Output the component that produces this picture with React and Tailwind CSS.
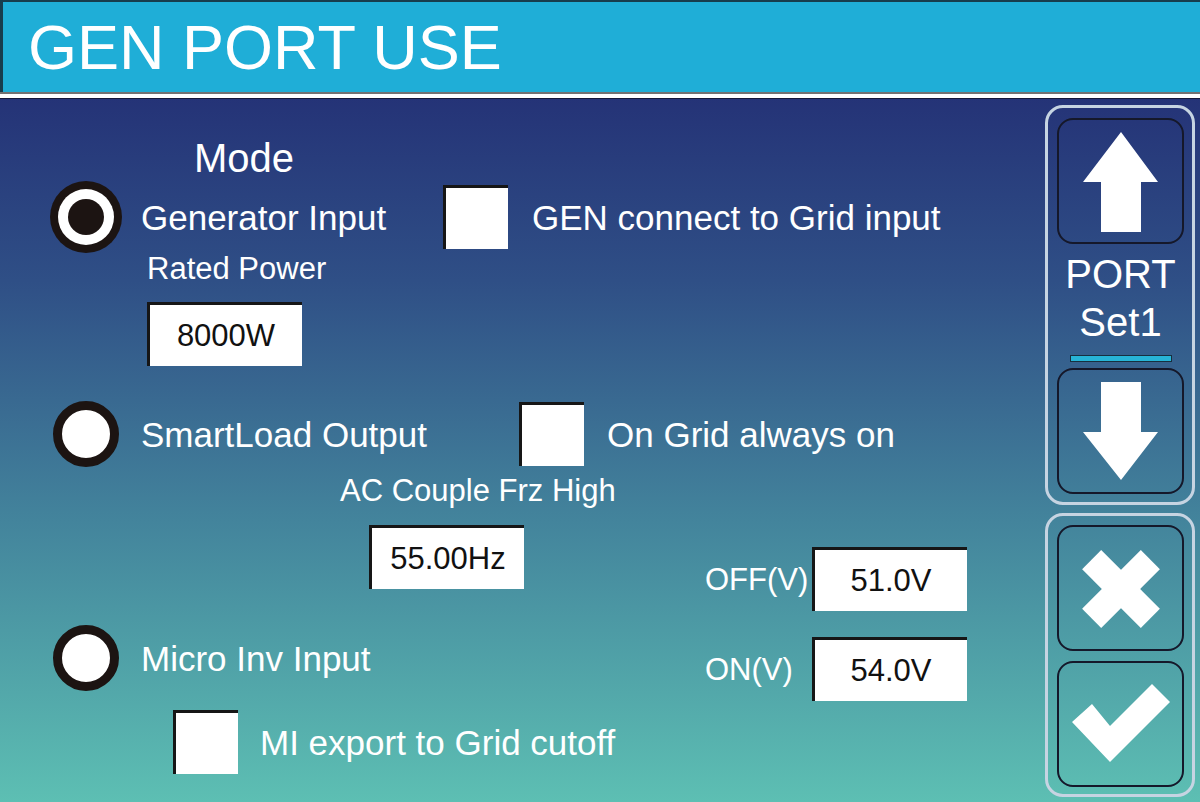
import React from 'react';

function Radio({ checked }) {
  return (
    <div className="w-[70px] h-[72px] shrink-0 flex items-center justify-center">
      {checked ? (
        <div className="w-[72px] h-[72px] shrink-0 rounded-full bg-[#1c1412] p-[8px]">
          <div className="w-full h-full rounded-full bg-white p-[10px]">
            <div className="w-full h-full rounded-full bg-[#1c1412]" />
          </div>
        </div>
      ) : (
        <div className="w-[66px] h-[66px] shrink-0 rounded-full bg-white border-[9px] border-[#1c1412]" />
      )}
    </div>
  );
}

function CheckBox() {
  return <div className="w-[65px] h-[64px] shrink-0 bg-white border-t-[3px] border-l-[3px] border-[#161616]" />;
}

function Field({ value }) {
  return (
    <div className="w-[155px] h-[64px] shrink-0 bg-white border-t-[3px] border-l-[3px] border-[#161616] flex items-center justify-center text-[31px] leading-none text-[#111]">
      {value}
    </div>
  );
}

function PanelButton({ children }) {
  return (
    <div className="w-[127px] h-[126px] rounded-[16px] border-2 border-[#15182a]">
      <svg viewBox="2 2 123 122" className="w-full h-full">{children}</svg>
    </div>
  );
}

export default function App() {
  return (
    <div className="w-[1200px] h-[802px] overflow-hidden flex flex-col font-['Liberation_Sans',Arial,sans-serif] text-white bg-[linear-gradient(180deg,#1f246f_0%,#2f4f86_35%,#43849c_65%,#5dbfb3_100%)]">
      {/* title bar */}
      <div className="h-[92px] shrink-0 bg-[#1faed7] border-t-2 border-l-[3px] border-[#173d4d] flex items-center pl-[25px]">
        <h1 className="text-[63px] leading-none">GEN PORT USE</h1>
      </div>
      <div className="h-[2px] shrink-0 bg-[#727272]" />
      <div className="h-[4px] shrink-0 bg-white" />
      <div className="h-[1px] shrink-0 bg-[#14183a]" />

      <div className="flex-1 flex">
        {/* settings */}
        <div className="flex-1 flex flex-col pt-[39px]">
          <div className="h-[40px] flex items-center pl-[194px] text-[40px] leading-none">Mode</div>

          <div className="mt-[3px] h-[72px] flex items-center pl-[51px]">
            <Radio checked />
            <span className="ml-[20px] w-[302px] text-[35px] leading-none">Generator Input</span>
            <CheckBox />
            <span className="ml-[24px] text-[35px] leading-none">GEN connect to Grid input</span>
          </div>

          <div className="h-[30px] flex items-center pl-[147px] text-[31px] leading-none">Rated Power</div>
          <div className="mt-[19px] ml-[147px]">
            <Field value="8000W" />
          </div>

          <div className="mt-[32px] h-[72px] flex items-center pl-[51px]">
            <Radio />
            <span className="ml-[20px] w-[378px] text-[35px] leading-none">SmartLoad Output</span>
            <CheckBox />
            <span className="ml-[23px] text-[35px] leading-none">On Grid always on</span>
          </div>

          <div className="mt-[5px] h-[30px] flex items-center pl-[340px] text-[31px] leading-none">AC Couple Frz High</div>

          <div className="flex">
            <div className="w-[705px] flex flex-col">
              <div className="mt-[20px] ml-[369px]">
                <Field value="55.00Hz" />
              </div>
              <div className="mt-[33px] h-[72px] flex items-center pl-[51px]">
                <Radio />
                <span className="ml-[20px] text-[35px] leading-none">Micro Inv Input</span>
              </div>
              <div className="mt-[16px] flex items-center pl-[173px]">
                <CheckBox />
                <span className="ml-[22px] text-[35px] leading-none">MI export to Grid cutoff</span>
              </div>
            </div>
            <div className="flex flex-col">
              <div className="mt-[42px] flex items-center">
                <span className="w-[107px] text-[31px] leading-none">OFF(V)</span>
                <Field value="51.0V" />
              </div>
              <div className="mt-[26px] flex items-center">
                <span className="w-[107px] text-[31px] leading-none">ON(V)</span>
                <Field value="54.0V" />
              </div>
            </div>
          </div>
        </div>

        {/* side keys */}
        <div className="w-[150px] shrink-0 mr-[5px] mt-[6px] flex flex-col">
          <div className="h-[400px] rounded-[18px] border-[3px] border-[#c6d4e2] pt-[10px] pl-[9px] flex flex-col">
            <PanelButton>
              <polygon points="64,14 101,64 84,64 84,114 44,114 44,64 26,64" fill="white" />
            </PanelButton>
            <div className="h-[124px] w-[127px] flex flex-col items-center">
              <span className="mt-[10px] text-[40px] leading-none">PORT</span>
              <span className="mt-[8px] text-[40px] leading-none">Set1</span>
              <div className="mt-[13px] w-[102px] h-[7px] bg-[#27b4d6] border border-[#173040]" />
            </div>
            <PanelButton>
              <polygon points="44,14 84,14 84,64 101,64 64,112 26,64 44,64" fill="white" />
            </PanelButton>
          </div>

          <div className="mt-[8px] h-[284px] rounded-[18px] border-[3px] border-[#c6d4e2] pt-[9px] pl-[9px] flex flex-col gap-[10px]">
            <PanelButton>
              <g fill="white">
                <rect x="22.5" y="50.5" width="83" height="27" transform="rotate(45 64 64)" />
                <rect x="22.5" y="50.5" width="83" height="27" transform="rotate(-45 64 64)" />
              </g>
            </PanelButton>
            <PanelButton>
              <polygon points="15,61 35,43 53,65 95,23 113,41 53,101" fill="white" />
            </PanelButton>
          </div>
        </div>
      </div>
    </div>
  );
}
